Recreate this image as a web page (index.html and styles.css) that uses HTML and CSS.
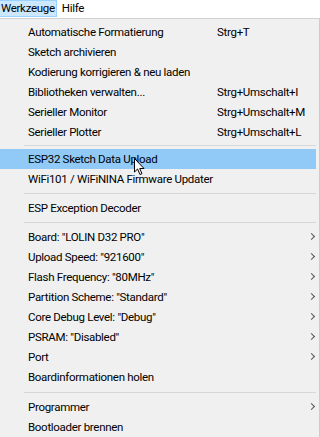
FILE: index.html
```html
<!DOCTYPE html>
<html>
<head>
<meta charset="utf-8">
<link rel="stylesheet" href="styles.css">
</head>
<body>
<div class="menubar">
  <span class="mb-item active">Werkzeuge</span>
  <span class="mb-item">Hilfe</span>
</div>
<div class="dropdown">
  <div class="item"><span class="label">Automatische Formatierung</span><span class="key">Strg+T</span></div>
  <div class="item"><span class="label">Sketch archivieren</span></div>
  <div class="item"><span class="label">Kodierung korrigieren &amp; neu laden</span></div>
  <div class="item"><span class="label">Bibliotheken verwalten...</span><span class="key">Strg+Umschalt+I</span></div>
  <div class="item"><span class="label">Serieller Monitor</span><span class="key">Strg+Umschalt+M</span></div>
  <div class="item"><span class="label">Serieller Plotter</span><span class="key">Strg+Umschalt+L</span></div>
  <div class="sep s7"></div>
  <div class="item hl"><span class="label">ESP32 Sketch Data Upload</span>
    <svg class="cursor" width="12" height="18" viewBox="0 0 12 18"><path d="M0.5 0.5 L0.5 14 L3.6 11 L6 16.5 L8 15.6 L5.7 10.5 L10 10.5 Z" fill="#fff" stroke="#000" stroke-width="1" stroke-linejoin="round"/></svg>
  </div>
  <div class="item"><span class="label">WiFi101 / WiFiNINA Firmware Updater</span></div>
  <div class="sep"></div>
  <div class="item"><span class="label">ESP Exception Decoder</span></div>
  <div class="sep"></div>
  <div class="item"><span class="label">Board: "LOLIN D32 PRO"</span><span class="arrow"></span></div>
  <div class="item"><span class="label">Upload Speed: "921600"</span><span class="arrow"></span></div>
  <div class="item"><span class="label">Flash Frequency: "80MHz"</span><span class="arrow"></span></div>
  <div class="item"><span class="label">Partition Scheme: "Standard"</span><span class="arrow"></span></div>
  <div class="item"><span class="label">Core Debug Level: "Debug"</span><span class="arrow"></span></div>
  <div class="item"><span class="label">PSRAM: "Disabled"</span><span class="arrow"></span></div>
  <div class="item"><span class="label">Port</span><span class="arrow"></span></div>
  <div class="item"><span class="label">Boardinformationen holen</span></div>
  <div class="sep s10"></div>
  <div class="item"><span class="label">Programmer</span><span class="arrow"></span></div>
  <div class="item"><span class="label">Bootloader brennen</span></div>
</div>
</body>
</html>
```
FILE: styles.css
```css
html, body {
  margin: 0;
  padding: 0;
  width: 320px;
  height: 437px;
  overflow: hidden;
  background: #ffffff;
  font-family: Roboto, "Open Sans", sans-serif;
  font-size: 11.5px;
  letter-spacing: -0.3px;
  color: #000;
}
.menubar {
  height: 18px;
  display: flex;
  align-items: flex-start;
  background: #fff;
}
.mb-item {
  height: 15px;
  line-height: 15px;
  padding: 0 6px 0 4px;
  border: 1px solid transparent;
}
.mb-item.active {
  background: #cce8ff;
  border-color: #99d1ff;
  border-left: none;
  padding: 0 1px;
}
.dropdown {
  background: #f0f0f0;
  border-top: 1px solid #d2d2d2;
  border-right: 1px solid #cccccc;
  padding-top: 3px;
  height: 420px;
  box-sizing: border-box;
}
.item {
  position: relative;
  height: 20px;
  display: flex;
  align-items: center;
  padding-left: 28px;
  margin-right: 3px;
}
.item.hl {
  background: #91c9f7;
}
.label {
  width: 189px;
  white-space: nowrap;
}
.key {
  white-space: nowrap;
}
.arrow {
  position: absolute;
  right: 2px;
  top: 7px;
  width: 4px;
  height: 4px;
  border-top: 1.5px solid #555;
  border-right: 1.5px solid #555;
  transform: rotate(45deg);
}
.sep {
  height: 9px;
  display: flex;
  align-items: center;
  margin-left: 24px;
  margin-right: 3px;
}
.sep::before {
  content: "";
  flex: 1;
  height: 1px;
  background: #d7d7d7;
}
.sep.s7 { height: 7px; }
.sep.s10 { height: 10px; }
.cursor {
  position: absolute;
  left: 134px;
  top: 9px;
  z-index: 2;
}
```
